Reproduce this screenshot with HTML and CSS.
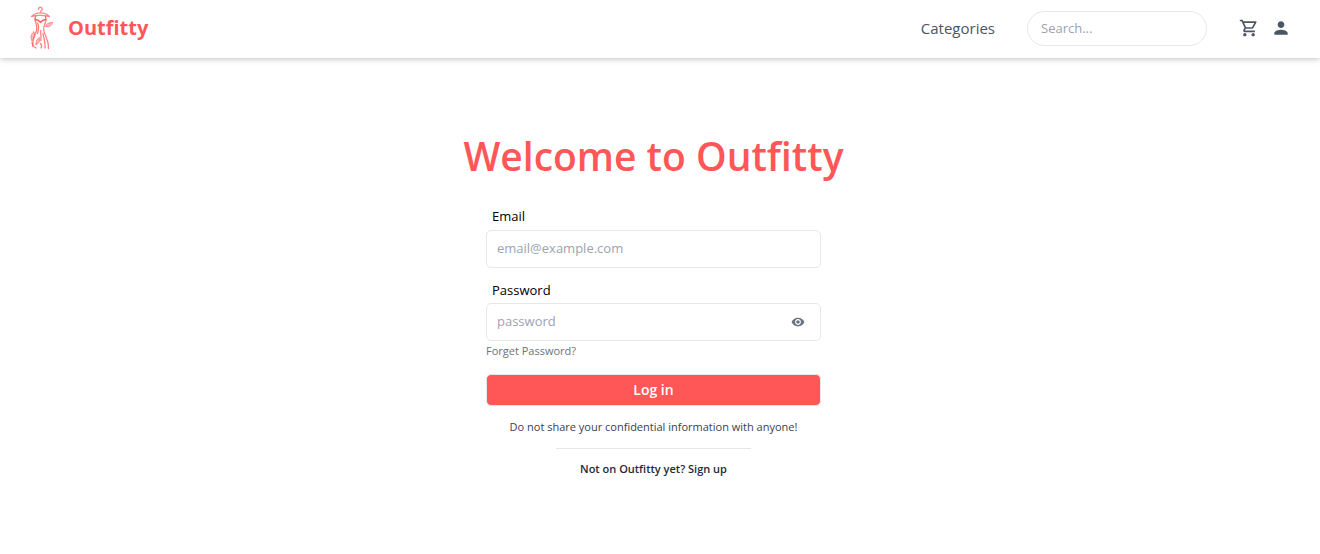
FILE: index.html
```html
<!DOCTYPE html>
<html lang="en">
<head>
<meta charset="utf-8">
<meta name="viewport" content="width=device-width, initial-scale=1">
<title>Outfitty</title>
<link rel="stylesheet" href="styles.css">
</head>
<body>
<header class="header">
  <a class="brand" href="#">
    <svg class="brand-logo" viewBox="0 0 25 45" fill="none" stroke="currentColor" stroke-width="1.300" stroke-linecap="round" stroke-linejoin="round" aria-hidden="true">
      <path stroke-opacity=".7" d="M9.500 4C9.300 1 13.300 1 13.200 3.800C13 5 11.500 5 11.500 7M2.500 11C5 8.300 8 7.300 11.500 7.300C15 7.300 18 8.300 20.500 11C14 9.500 8 9.500 2.500 11"/>
      <path stroke-opacity=".9" d="M6.500 11L6 14C8 14 10 15 11.500 17C13 15 15 14 17 14L16.500 11"/>
      <path stroke-opacity=".75" d="M6 14C6.500 18 9 20 7.500 25C6.200 30 3 34 3.800 41M17 14C17 18 13.800 20 14.800 25C15.800 31 20 34 19.500 43M8.500 17.500C10 20 9.800 24 8.500 28M14 28C15 34 16.500 37 16 42.500M11.800 25C11.300 28 12.500 31 11.800 35"/>
      <path d="M17 21C17.200 18 19.500 17 23.500 17C22.500 20.500 20 22 17 21ZM3 35C1 31.500 2 28.500 5 26C6 29 5.500 32.500 3 35ZM7 39C6.500 36 8 33 10.500 32C11 35.500 10 38 7 39Z" stroke-opacity=".65" stroke-width=".9" fill="currentColor" fill-opacity=".4"/>
      <path stroke-opacity=".75" d="M11.500 38C12.800 39.500 13 41 12 42.500M3 37C3.500 40 5 41.500 7 42.500"/>
    </svg>
    <span class="brand-name">Outfitty</span>
  </a>
  <nav class="nav">
    <a class="nav-link" href="#">Categories</a>
    <input class="search" type="search" placeholder="Search..." aria-label="Search">
    <div class="nav-icons">
      <a class="icon-link" href="#" aria-label="Cart">
        <svg class="nav-icon" viewBox="0 0 24 24" fill="currentColor"><path d="M15.550 13c.75 0 1.410-.41 1.750-1.030l3.580-6.490A.996.996 0 0 0 20.010 4H5.210l-.94-2H1v2h2l3.600 7.590-1.350 2.440C4.520 15.370 5.480 17 7 17h12v-2H7l1.100-2h7.450zM6.160 6h12.150l-2.760 5H8.530L6.160 6zM7 18c-1.100 0-1.990.9-1.990 2S5.900 22 7 22s2-.9 2-2-.9-2-2-2zm10 0c-1.100 0-1.990.9-1.990 2s.89 2 1.990 2 2-.9 2-2-.9-2-2-2z"/></svg>
      </a>
      <a class="icon-link" href="#" aria-label="Account">
        <svg class="nav-icon" viewBox="0 0 24 24" fill="currentColor"><path d="M12 12c2.210 0 4-1.790 4-4s-1.790-4-4-4-4 1.790-4 4 1.790 4 4 4zm0 2c-2.670 0-8 1.340-8 4v2h16v-2c0-2.660-5.330-4-8-4z"/></svg>
      </a>
    </div>
  </nav>
</header>
<main class="main">
  <h1 class="title">Welcome to Outfitty</h1>
  <form class="form">
    <label class="label" for="email">Email</label>
    <input class="field" id="email" type="email" placeholder="email@example.com">
    <label class="label label-next" for="password">Password</label>
    <div class="password">
      <input class="field" id="password" type="password" placeholder="password">
      <button class="reveal" type="button" aria-label="Show password">
        <svg class="reveal-icon" viewBox="0 0 24 24" fill="currentColor"><path d="M12 4.500C7 4.500 2.730 7.610 1 12c1.730 4.390 6 7.500 11 7.500s9.270-3.110 11-7.500c-1.730-4.390-6-7.500-11-7.500zM12 17c-2.760 0-5-2.240-5-5s2.240-5 5-5 5 2.240 5 5-2.240 5-5 5zm0-8c-1.660 0-3 1.340-3 3s1.340 3 3 3 3-1.340 3-3-1.340-3-3-3z"/></svg>
      </button>
    </div>
    <a class="forgot" href="#">Forget Password?</a>
    <button class="submit" type="submit">Log in</button>
  </form>
  <p class="notice">Do not share your confidential information with anyone!</p>
  <hr class="divider">
  <a class="signup" href="#">Not on Outfitty yet? Sign up</a>
</main>
</body>
</html>
```
FILE: styles.css
```css
* {
  box-sizing: border-box;
}

body {
  margin: 0;
  background: #fff;
  color: #000;
  font-family: "Open Sans", "Noto Sans", sans-serif;
  font-size: 13px;
  line-height: 20px;
}

a {
  color: inherit;
  text-decoration: none;
}

input,
button {
  font: inherit;
}

.header {
  display: flex;
  align-items: center;
  justify-content: space-between;
  padding: 5px 29px 7px;
  box-shadow: 0 1px 6px rgba(0, 0, 0, .25);
}

.brand {
  display: flex;
  align-items: center;
  gap: 14px;
  color: #ff5757;
}

.brand-logo {
  width: 25px;
  height: 46px;
}

.brand-name {
  font-size: 20px;
  font-weight: 700;
  line-height: 28px;
}

.nav {
  display: flex;
  align-items: center;
  gap: 32px;
  color: #4b5563;
}

.nav-link {
  font-size: 15px;
}

.search {
  width: 180px;
  height: 35px;
  padding: 0 13px;
  border: 1px solid #e5e7eb;
  border-radius: 18px;
  background: #fff;
  appearance: none;
}

.search::placeholder,
.field::placeholder {
  color: #9ca3af;
  opacity: 1;
}

.nav-icons {
  display: flex;
  gap: 12px;
}

.icon-link {
  display: flex;
}

.nav-icon {
  width: 20px;
  height: 20px;
}

.main {
  display: flex;
  flex-direction: column;
  align-items: center;
  padding: 68px 13px 40px 0;
}

.title {
  margin: 0;
  color: #ff5757;
  font-size: 39px;
  font-weight: 600;
  line-height: 60px;
}

.form {
  display: flex;
  flex-direction: column;
  width: 335px;
  max-width: 100%;
  margin-top: 20px;
}

.label {
  margin: 0 6px 4px;
}

.label-next {
  margin-top: 12px;
  margin-bottom: 3px;
}

.field {
  width: 100%;
  height: 38px;
  padding: 0 10px 2px;
  border: 1px solid #e5e7eb;
  border-radius: 5px;
  background: #fff;
}

.password {
  position: relative;
}

.reveal {
  position: absolute;
  top: 12px;
  right: 16px;
  display: flex;
  padding: 0;
  border: 0;
  background: none;
  color: #6b7280;
}

.reveal-icon {
  width: 14px;
  height: 14px;
}

.forgot {
  align-self: flex-start;
  color: #6b7280;
  font-size: 11px;
}

.submit {
  height: 32px;
  margin-top: 13px;
  padding: 0;
  border: 1px solid #e5e7eb;
  border-radius: 5px;
  background: #ff5757;
  color: #fff;
  font-size: 14px;
  font-weight: 600;
}

.notice {
  margin: 11px 0;
  color: #374151;
  font-size: 11px;
}

.divider {
  width: 195px;
  margin: 0 0 10px;
  border: 0;
  border-top: 1px solid #e5e7eb;
}

.signup {
  color: #1f2937;
  font-size: 11px;
  font-weight: 600;
}
```
